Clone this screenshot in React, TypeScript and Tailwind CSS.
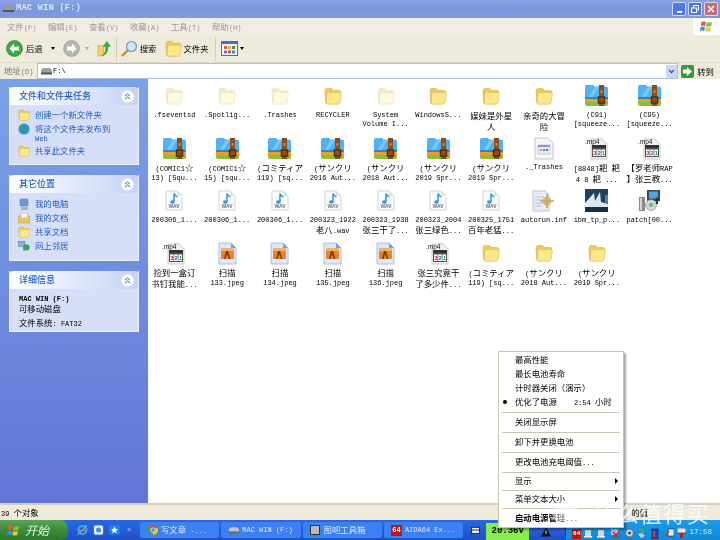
import { ReactNode } from "react";

// latin runs use a half-width mono, CJK runs sit a bit larger, like SimSun at small size
function T({ children }: { children: string }) {
  const parts = children.split(/([\u2e80-\u9fff\uff00-\uffef\u3000-\u30ff\u2606]+)/);
  return (
    <span>
      {parts.map((p, i) =>
        i % 2 === 1 ? (
          <span key={i} className="text-[8.4px] font-['Noto_Sans_CJK_SC']">
            {p}
          </span>
        ) : (
          <span key={i}>{p}</span>
        )
      )}
    </span>
  );
}

function Folder({ pale = false, size = 18 }: { pale?: boolean; size?: number }) {
  return (
    <svg width={size} height={size} viewBox="0 0 18 18">
      <path
        d="M1 4 Q1 1.5 3 1.5 H7.5 L9.5 3.5 H15 Q17 3.5 16.8 5.5 L15.8 15 Q15.6 17 13.5 17 H3.5 Q1.8 17 1.6 15 Z"
        fill={pale ? "#f4ebc6" : "#eccb5e"}
        stroke={pale ? "#e6dcb8" : "#c9a23e"}
        strokeWidth="0.5"
      />
      <path
        d="M2.8 7.2 Q3 5.6 4.6 5.6 H15.8 Q17.6 5.6 17.4 7.2 L15.9 15.4 Q15.6 17 14 17 H3.6 Q2.2 17 2.3 15.4 Z"
        fill={pale ? "#fff9de" : "#ffe888"}
        stroke={pale ? "#e9dfbc" : "#d9b54a"}
        strokeWidth="0.5"
      />
    </svg>
  );
}

function Zip() {
  return (
    <svg width="23" height="21" viewBox="0 0 23 21">
      <path d="M0 2 Q0 0 2 0 H8 L9.5 1.5 H21 Q23 1.5 23 3.5 V14 H0 Z" fill="#4fb2f2" />
      <path d="M3 13 L10 2 H14 L7 13 Z" fill="#7ac8f6" />
      <path d="M0 12 H23 V14 H0 Z" fill="#2e86d0" />
      <path d="M0 14 H23 V17 H0 Z" fill="#f39c1f" />
      <path d="M0 17 H23 V19 Q23 21 21 21 H2 Q0 21 0 19 Z" fill="#86bf3e" />
      <rect x="14" y="0" width="5" height="21" fill="#8a4e1f" />
      <rect x="13.4" y="12" width="6.2" height="6" fill="none" stroke="#4f2b0e" strokeWidth="1.3" />
      <rect x="15.5" y="5" width="2" height="3" fill="#c08a4a" />
    </svg>
  );
}

function Wav() {
  return (
    <svg width="18" height="21" viewBox="0 0 18 21">
      <path d="M1 1 H12 L17 6 V20 H1 Z" fill="#fbfcfe" stroke="#cfd3d9" />
      <path d="M12 1 V6 H17 Z" fill="#dfe3e8" />
      <path d="M9 3.5 V11.5 M9 3.5 Q10 6.5 12.5 7" stroke="#2a9be0" strokeWidth="1.5" fill="none" />
      <ellipse cx="7.4" cy="12" rx="2.4" ry="1.8" fill="#2a9be0" />
      <text x="9" y="18.2" textAnchor="middle" fontSize="5" fill="#6b7078" fontFamily="Liberation Sans" fontWeight="700">
        WAV
      </text>
    </svg>
  );
}

function Mp4() {
  return (
    <svg width="24" height="23" viewBox="0 0 24 23">
      <path d="M6 2 H17 L22 7 V22 H6 Z" fill="#f2f2f2" stroke="#c9c9c9" />
      <text x="0" y="6.5" fontSize="6.5" fill="#111" fontFamily="Liberation Sans">
        .mp4
      </text>
      <rect x="7" y="8" width="14" height="3" fill="#333" />
      <rect x="7" y="11" width="14" height="9" fill="#555" />
      <rect x="8" y="12.5" width="3.6" height="6.5" fill="#fff" />
      <rect x="12.2" y="12.5" width="3.6" height="6.5" fill="#fff" />
      <rect x="16.4" y="12.5" width="3.6" height="6.5" fill="#fff" />
      <text x="8.3" y="18.3" fontSize="6" fill="#d02020" fontFamily="Liberation Sans" fontWeight="700">3</text>
      <text x="12.6" y="18.3" fontSize="6" fill="#2060d0" fontFamily="Liberation Sans" fontWeight="700">2</text>
      <text x="16.8" y="18.3" fontSize="6" fill="#20a040" fontFamily="Liberation Sans" fontWeight="700">1</text>
    </svg>
  );
}

function Jpeg() {
  return (
    <svg width="19" height="23" viewBox="0 0 19 23">
      <path d="M1 1 H13 L18 6 V22 H1 Z" fill="#dbe7fb" stroke="#a9c0e8" />
      <path d="M13 1 V6 H18 Z" fill="#6fa2ea" />
      <rect x="3" y="6" width="13" height="11" fill="#e8862e" />
      <rect x="3" y="6" width="13" height="3" fill="#f3b264" />
      <path d="M8 9 L6 17 H7.5 L9 12 L11 17 H12.5 L10 9 Z" fill="#7a3a14" />
    </svg>
  );
}

function DocIcon() {
  return (
    <svg width="20" height="23" viewBox="0 0 20 23">
      <path d="M1 1 H14 L19 6 V22 H1 Z" fill="#f6f6f8" stroke="#c4c4cc" />
      <rect x="4" y="8" width="12" height="9" fill="#e9ecf6" stroke="#a8add0" strokeWidth="0.6" />
      <rect x="4" y="8" width="12" height="2" fill="#8d93c4" />
      <rect x="6" y="12" width="2" height="2" fill="#e8932a" />
      <rect x="9" y="12" width="2" height="2" fill="#3f9c4d" />
      <rect x="12" y="12" width="2" height="2" fill="#3f6fc4" />
    </svg>
  );
}

function InfIcon() {
  return (
    <svg width="23" height="22" viewBox="0 0 23 22">
      <path d="M1 1 H13 L17 5 V21 H1 Z" fill="#e6edf8" stroke="#b5c3da" />
      <path d="M3 7 H12 M3 10 H10 M3 13 H11 M3 16 H9" stroke="#a7b6cf" strokeWidth="0.8" />
      <circle cx="15" cy="11" r="4.5" fill="#d9b97a" />
      <circle cx="15" cy="11" r="1.6" fill="#f4ead2" />
      <path d="M15 4 V18 M8 11 H22" stroke="#c9a45e" strokeWidth="1.6" />
    </svg>
  );
}

function IbmIcon() {
  return (
    <svg width="23" height="23" viewBox="0 0 23 23">
      <rect width="23" height="23" fill="#23405e" />
      <path d="M0 14 L9 4 L10 12 L15 3 L16 13 L23 15 V23 H0 Z" fill="#dfe7ee" />
      <path d="M0 18 H23 V23 H0 Z" fill="#163049" />
      <rect x="20" y="6" width="3" height="8" fill="#5d7f9e" />
    </svg>
  );
}

function SetupIcon() {
  return (
    <svg width="23" height="23" viewBox="0 0 23 23">
      <rect x="9" y="1" width="13" height="11" fill="#3f4654" />
      <rect x="11" y="2.5" width="9" height="7" fill="#49a7e0" />
      <rect x="1" y="8" width="6" height="14" fill="#8a8a8a" />
      <rect x="2" y="9" width="2" height="12" fill="#d6d6d6" />
      <circle cx="13" cy="16" r="5.5" fill="#cfd6de" stroke="#666" strokeWidth="0.5" />
      <circle cx="13" cy="16" r="2" fill="#6cbb3c" />
      <path d="M19 8 L22 12 H20 V15 H18 V12 H16 Z" fill="#333" />
    </svg>
  );
}

const icons: Record<string, ReactNode> = {
  h: <Folder pale />,
  f: <Folder />,
  z: <Zip />,
  d: <DocIcon />,
  m: <Mp4 />,
  w: <Wav />,
  j: <Jpeg />,
  i: <InfIcon />,
  b: <IbmIcon />,
  s: <SetupIcon />,
};

const files: [string, string][] = [
  ["h", ".fseventsd"],
  ["h", ".Spotlig..."],
  ["h", ".Trashes"],
  ["f", "RECYCLER"],
  ["h", "System\nVolume I..."],
  ["f", "WindowsS..."],
  ["f", "媒妹是外星\n人"],
  ["f", "亲奇的大冒\n险"],
  ["z", "(C91)\n[squeeze..."],
  ["z", "(C95)\n[squeeze..."],
  ["z", "(COMIC1☆\n13) [Squ..."],
  ["z", "(COMIC1☆\n15) [squ..."],
  ["z", "(コミティア\n119) [sq..."],
  ["z", "(サンクリ\n2016 Aut..."],
  ["z", "(サンクリ\n2018 Aut..."],
  ["z", "(サンクリ\n2019 Spr..."],
  ["z", "(サンクリ\n2019 Spr..."],
  ["d", "._Trashes"],
  ["m", "[8848]耙 耙\n4 8 耙 ..."],
  ["m", "【罗老师RAP\n】张三教..."],
  ["w", "200306_1..."],
  ["w", "200306_1..."],
  ["w", "200306_1..."],
  ["w", "200323_1922\n老八.wav"],
  ["w", "200323_1938\n张三干了..."],
  ["w", "200323_2004\n张三绿色..."],
  ["w", "200325_1751\n百年老猛..."],
  ["i", "autorun.inf"],
  ["b", "ibm_tp_p..."],
  ["s", "patch[00..."],
  ["m", "捡到一盒订\n书钉我能..."],
  ["j", "扫描\n133.jpeg"],
  ["j", "扫描\n134.jpeg"],
  ["j", "扫描\n135.jpeg"],
  ["j", "扫描\n136.jpeg"],
  ["m", "张三究竟干\n了多少件..."],
  ["f", "(コミティア\n119) [sq..."],
  ["f", "(サンクリ\n2018 Aut..."],
  ["f", "(サンクリ\n2019 Spr..."],
];

function Chevron() {
  return (
    <span className="flex h-[13px] w-[13px] items-center justify-center rounded-full bg-white shadow-[0_0_1px_#8aa0dc]">
      <svg width="7" height="7" viewBox="0 0 7 7" fill="none" stroke="#215dc6" strokeWidth="1">
        <path d="M1 3.2 L3.5 1 L6 3.2 M1 6 L3.5 3.8 L6 6" />
      </svg>
    </span>
  );
}

function Panel({ title, children, bodyClass }: { title: string; children: ReactNode; bodyClass: string }) {
  return (
    <div className="border-x border-b border-[#eef2fd]">
      <div className="flex h-[18px] items-center justify-between rounded-t-[3px] bg-gradient-to-r from-white to-[#c6d3f7] pl-[9px] pr-[4px]">
        <span className="text-[9px] font-['Noto_Sans_CJK_SC'] font-medium text-[#215dc6]">{title}</span>
        <Chevron />
      </div>
      <div className={`bg-[#d6dff7] ${bodyClass}`}>{children}</div>
    </div>
  );
}

function LinkRow({ icon, children }: { icon: ReactNode; children: ReactNode }) {
  return (
    <div className="flex items-start gap-[5px] leading-[9px] text-[#215dc6]">
      <span className="flex h-[14px] w-[12px] items-center justify-center">{icon}</span>
      <span className="pt-[2px]">{children}</span>
    </div>
  );
}

const GlobeIcon = (
  <svg width="12" height="12" viewBox="0 0 12 12">
    <circle cx="6" cy="6" r="5.5" fill="#2e8fd6" />
    <path d="M2 3 Q5 2 6 4 Q5 7 3 6 Z M7 6 Q10 5 10 8 Q8 11 7 9 Z" fill="#3fa83f" />
  </svg>
);
const PcIcon = (
  <svg width="12" height="13" viewBox="0 0 12 13">
    <rect x="2" y="1" width="8" height="7" rx="1" fill="#6f96d8" stroke="#4a6ea8" strokeWidth="0.5" />
    <rect x="3" y="9" width="7" height="3" fill="#a7b4c8" />
  </svg>
);
const DocsIcon = (
  <svg width="12" height="12" viewBox="0 0 12 12">
    <path d="M0.5 4 H11.5 V11 H0.5 Z" fill="#eac56c" stroke="#b8953a" strokeWidth="0.5" />
    <rect x="3" y="1" width="6.5" height="5" fill="#f7f7f7" stroke="#9aa" strokeWidth="0.4" />
  </svg>
);
const NetIcon = (
  <svg width="13" height="12" viewBox="0 0 13 12">
    <rect x="0.5" y="1" width="7" height="5.5" fill="#7fb0e0" stroke="#4a6ea8" strokeWidth="0.5" />
    <circle cx="9" cy="7.5" r="3.5" fill="#3fa83f" />
    <path d="M6.5 6 L6.5 11" stroke="#2e8fd6" strokeWidth="1.5" />
  </svg>
);

function Sidebar() {
  return (
    <aside className="flex w-[148px] shrink-0 flex-col gap-[10px] bg-gradient-to-b from-[#7ba2e7] to-[#6375d6] pl-[9px] pr-[9px] pt-[8px]">
      <Panel title="文件和文件夹任务" bodyClass="h-[59px] pl-[8px] pt-[3px]">
        <LinkRow icon={<Folder size={12} />}><T>创建一个新文件夹</T></LinkRow>
        <LinkRow icon={GlobeIcon}>
          <T>将这个文件夹发布到</T>
          <br />
          <T>Web</T>
        </LinkRow>
        <LinkRow icon={<Folder size={12} />}><T>共享此文件夹</T></LinkRow>
      </Panel>
      <Panel title="其它位置" bodyClass="h-[67px] pl-[8px] pt-[4px]">
        <LinkRow icon={PcIcon}><T>我的电脑</T></LinkRow>
        <LinkRow icon={DocsIcon}><T>我的文档</T></LinkRow>
        <LinkRow icon={<Folder size={12} />}><T>共享文档</T></LinkRow>
        <LinkRow icon={NetIcon}><T>网上邻居</T></LinkRow>
      </Panel>
      <Panel title="详细信息" bodyClass="h-[42px] pl-[9px] pt-[6px] text-black leading-[9px]">
        <div className="font-bold"><T>MAC WIN (F:)</T></div>
        <div><T>可移动磁盘</T></div>
        <div className="mt-[3px]"><T>文件系统: FAT32</T></div>
      </Panel>
    </aside>
  );
}

function FileGrid() {
  return (
    <main className="flex-1 bg-white pt-[4.5px]">
      <div className="grid grid-cols-[repeat(10,52.8px)] auto-rows-[52.6px]">
        {files.map(([k, label], i) => (
          <div key={i} className="flex flex-col items-center">
            <div className="flex h-[24px] items-center justify-center">{icons[k]}</div>
            <div className="mt-[3px] whitespace-pre-line text-center leading-[9px] text-black">
              <T>{label}</T>
            </div>
          </div>
        ))}
      </div>
    </main>
  );
}

function ArrowCircle({ gray = false, dir = "l" }: { gray?: boolean; dir?: string }) {
  return (
    <svg width="17" height="17" viewBox="0 0 17 17">
      <circle cx="8.5" cy="8.5" r="8" fill={gray ? "#b6b6b0" : "#3fa83f"} stroke={gray ? "#9a9a94" : "#2c7c2c"} strokeWidth="0.6" />
      <path
        d={dir === "l" ? "M8 3.5 L3.5 8.5 L8 13.5 V10.5 H13 V6.5 H8 Z" : "M9 3.5 L13.5 8.5 L9 13.5 V10.5 H4 V6.5 H9 Z"}
        fill="#fff"
      />
    </svg>
  );
}

function Toolbar() {
  return (
    <div className="flex h-[28px] items-center bg-[#eeebdc] pl-[6px] border-b border-[#dedbc9]">
      <ArrowCircle />
      <span className="ml-[3px] text-[8.4px] font-['Noto_Sans_CJK_SC']">后退</span>
      <span className="ml-[8px] h-0 w-0 border-x-[2px] border-t-[3px] border-x-transparent border-t-black" />
      <span className="ml-[8px]"><ArrowCircle gray dir="r" /></span>
      <span className="ml-[5px] h-0 w-0 border-x-[2px] border-t-[3px] border-x-transparent border-t-[#aaa]" />
      <span className="ml-[8px] flex">
        <svg width="15" height="17" viewBox="0 0 16 18">
          <path d="M1 6 H7 V17 H1 Z" fill="#f3d26b" stroke="#b8953a" strokeWidth="0.5" />
          <path d="M4 17 C9 14 9 11 9 7 H6 L10.5 1 L15 7 H12 C12 12 11 16 4 17 Z" fill="#3fa83f" />
        </svg>
      </span>
      <span className="ml-[4px] h-[24px] w-px bg-[#cfcdb9]" />
      <span className="ml-[3px] flex">
        <svg width="18" height="18" viewBox="0 0 18 18">
          <circle cx="11.5" cy="6.5" r="5" fill="#cfe6f8" stroke="#6f96c4" strokeWidth="1.2" />
          <path d="M8 10 L2 16" stroke="#c98a3a" strokeWidth="2.4" />
        </svg>
      </span>
      <span className="ml-[2px] text-[8.4px] font-['Noto_Sans_CJK_SC']">搜索</span>
      <span className="ml-[8px] flex"><Folder size={17} /></span>
      <span className="ml-[2px] text-[8.4px] font-['Noto_Sans_CJK_SC']">文件夹</span>
      <span className="ml-[6px] h-[24px] w-px bg-[#cfcdb9]" />
      <span className="ml-[5px] flex">
        <svg width="17" height="15" viewBox="0 0 17 15">
          <rect x="0.5" y="0.5" width="16" height="14" fill="#f4f7fd" stroke="#3d72c6" />
          <rect x="0.5" y="0.5" width="16" height="2.5" fill="#3d72c6" />
          <rect x="3" y="5" width="3" height="3" fill="#d9534f" />
          <rect x="7" y="5" width="3" height="3" fill="#e8b32c" />
          <rect x="11" y="5" width="3" height="3" fill="#3f9c4d" />
          <rect x="3" y="9.5" width="3" height="3" fill="#4a7fd0" />
          <rect x="7" y="9.5" width="3" height="3" fill="#d9534f" />
          <rect x="11" y="9.5" width="3" height="3" fill="#4a7fd0" />
        </svg>
      </span>
      <span className="ml-[2px] h-0 w-0 border-x-[2px] border-t-[3px] border-x-transparent border-t-black" />
    </div>
  );
}

function TitleBar() {
  const btn = "flex h-[14px] w-[14px] items-center justify-center rounded-[2px] border border-white/70";
  return (
    <div className="flex h-[18px] items-center bg-gradient-to-b from-[#8aa5e4] via-[#7a97df] to-[#7f9be0] pl-[2px] pr-[2px]">
      <svg width="12" height="8" viewBox="0 0 12 8">
        <path d="M1 3 L3 1 H10 L12 3 V6 H1 Z" fill="#9a9a9a" />
        <rect x="1" y="5" width="11" height="2" fill="#555" />
      </svg>
      <span className="ml-[2px] font-bold text-[9px] text-[#d8e2f8]">MAC WIN (F:)</span>
      <div className="ml-auto flex gap-[2px]">
        <span className={`${btn} bg-[#4f79e0]`}>
          <span className="mt-[6px] h-[2px] w-[5px] bg-white" />
        </span>
        <span className={`${btn} bg-[#4f79e0]`}>
          <svg width="8" height="8" viewBox="0 0 8 8" fill="none" stroke="#fff">
            <rect x="2.5" y="0.5" width="5" height="4.5" />
            <rect x="0.5" y="3" width="5" height="4.5" fill="#4f79e0" />
          </svg>
        </span>
        <span className={`${btn} bg-[#b9737c]`}>
          <svg width="8" height="8" viewBox="0 0 8 8" stroke="#fff" strokeWidth="1.3">
            <path d="M1 1 L7 7 M7 1 L1 7" />
          </svg>
        </span>
      </div>
    </div>
  );
}

function WinFlag({ size = 13 }: { size?: number }) {
  return (
    <svg width={size} height={size} viewBox="0 0 13 13">
      <path d="M1.5 2 Q3.5 1 6 2 L5.2 6 Q3 5 0.8 6 Z" fill="#e8562a" />
      <path d="M7 2.2 Q9.5 3 12 2 L11.2 6 Q9 7 6.2 6.2 Z" fill="#7cc242" />
      <path d="M0.6 7 Q3 6 5 7 L4.3 11 Q2.2 10 0 11 Z" fill="#3f8fe0" />
      <path d="M6 7.2 Q8.5 8 11 7 L10.2 11 Q7.8 12 5.3 11 Z" fill="#f7c52b" />
    </svg>
  );
}

function MenuBar() {
  const items = ["文件(F)", "编辑(E)", "查看(V)", "收藏(A)", "工具(T)", "帮助(H)"];
  return (
    <div className="flex h-[17px] items-center bg-[#f0eee1] pl-[7px]">
      <div className="flex gap-[12px] text-[#9a988c]">
        {items.map((m) => (
          <span key={m} className="w-[29px] whitespace-nowrap"><T>{m}</T></span>
        ))}
      </div>
      <div className="ml-auto flex h-full w-[27px] items-center justify-center bg-white">
        <WinFlag />
      </div>
    </div>
  );
}

function AddressBar() {
  return (
    <div className="flex h-[16px] items-center bg-[#eeebdc] pl-[4px] pr-[6px]">
      <span className="w-[33px] whitespace-nowrap text-[#77756a]"><T>地址(D)</T></span>
      <div className="flex h-full flex-1 items-center border border-[#aebfd6] bg-white pl-[2px]">
        <svg width="12" height="7" viewBox="0 0 12 7">
          <path d="M1 2 L3 0 H10 L12 2 V5 H1 Z" fill="#a0a0a0" />
          <rect x="1" y="4.5" width="11" height="2" fill="#555" />
        </svg>
        <span className="ml-[1px]">F:\</span>
        <span className="ml-auto flex h-[13px] w-[11px] items-center justify-center rounded-[1px] bg-[#c9d8f6]">
          <svg width="7" height="5" viewBox="0 0 7 5" fill="none" stroke="#3b5a9b" strokeWidth="1.3">
            <path d="M1 1 L3.5 3.5 L6 1" />
          </svg>
        </span>
      </div>
      <span className="ml-[3px] flex items-center gap-[3px] text-[8.4px] font-['Noto_Sans_CJK_SC']">
        <svg width="13" height="13" viewBox="0 0 13 13">
          <rect width="13" height="13" rx="2" fill="#2f9a3e" />
          <path d="M6 2 L11 6.5 L6 11 V8.5 H2 V4.5 H6 Z" fill="#fff" />
        </svg>
        转到
      </span>
    </div>
  );
}

function TaskButton({ icon, label }: { icon: ReactNode; label: string }) {
  return (
    <div className="flex h-[16px] w-[79.3px] shrink-0 items-center gap-[3px] rounded-[2px] bg-[#3c81f3] pl-[7px] text-[#dfe9fb]">
      <span className="flex w-[11px] justify-center">{icon}</span>
      <span className="whitespace-nowrap"><T>{label}</T></span>
    </div>
  );
}

function Tray() {
  return (
    <div className="ml-[14px] flex h-full flex-1 items-center border-l border-[#10388f] bg-gradient-to-b from-[#1b9be8] to-[#0f8ad8] pl-[6px]">
      <span className="mt-[7px] flex h-[10px] w-[9px] items-center justify-center bg-[#b51a1a] text-[6px] font-bold text-white">64</span>
      <svg className="ml-[3px] mt-[7px]" width="8" height="9" viewBox="0 0 8 9">
        <rect x="1" y="1" width="6" height="6" fill="#cfd8e8" />
        <rect x="0" y="7" width="8" height="1.5" fill="#fff" />
      </svg>
      <svg className="ml-[5px] mt-[7px]" width="8" height="9" viewBox="0 0 8 9">
        <rect x="1" y="1" width="6" height="6" fill="#cfd8e8" />
        <rect x="0" y="7" width="8" height="1.5" fill="#fff" />
      </svg>
      <svg className="ml-[6px] mt-[6px]" width="9" height="10" viewBox="0 0 9 10">
        <rect x="0" y="1" width="7" height="6" fill="#9fc0e8" />
        <path d="M2 4 L8 10 M8 4 L2 10" stroke="#d8201c" strokeWidth="1.6" />
      </svg>
      <svg className="ml-[5px] mt-[6px]" width="9" height="10" viewBox="0 0 9 10">
        <circle cx="4.5" cy="5" r="4" fill="#c4ccd6" stroke="#445" strokeWidth="0.6" />
        <circle cx="4.5" cy="5" r="1.3" fill="#334" />
      </svg>
      <svg className="ml-[3px] mt-[6px]" width="9" height="10" viewBox="0 0 9 10">
        <path d="M1 1 L5 0 L8 4 L4 5 Z" fill="#4fa84f" />
        <path d="M1 6 L5 5 L8 8 L4 10 Z" fill="#bcd" />
      </svg>
      <svg className="ml-[5px] mt-[6px]" width="8" height="11" viewBox="0 0 8 11">
        <rect x="1" y="1" width="6" height="10" fill="#2a3fb8" stroke="#111" strokeWidth="0.5" />
        <rect x="2" y="3" width="2" height="6" fill="#e33" />
      </svg>
      <svg className="ml-[6px] mt-[6px]" width="9" height="10" viewBox="0 0 9 10">
        <rect x="3" y="1" width="6" height="7" fill="#e8e8e8" stroke="#222" strokeWidth="0.6" />
        <path d="M0 9 L4 3" stroke="#d33" strokeWidth="1.4" />
      </svg>
      <svg className="ml-[3px] mt-[6px]" width="9" height="11" viewBox="0 0 9 11">
        <rect x="0" y="0" width="9" height="5" fill="#e6e6e6" stroke="#222" strokeWidth="0.6" />
        <rect x="3" y="5" width="3" height="5" fill="#d01818" />
      </svg>
      <span className="ml-auto mt-[5px] pr-[8px] text-[7.5px] leading-[9px] text-[#dcecff]">17:58</span>
    </div>
  );
}

function Taskbar() {
  return (
    <div className="flex h-[20px] items-center bg-gradient-to-b from-[#2a66e0] via-[#245edb] to-[#1f4fc0]">
      <div className="flex h-full w-[68px] shrink-0 items-center gap-[5px] rounded-r-[8px] bg-gradient-to-b from-[#5aa457] via-[#3c8a3c] to-[#2d7a2d] pl-[7px]">
        <WinFlag />
        <span className="font-['Noto_Sans_CJK_SC'] text-[12px] italic text-[#eaf5ea]">开始</span>
      </div>
      <div className="ml-[9px] flex w-[63px] shrink-0 items-center gap-[5px]">
        <svg width="11" height="12" viewBox="0 0 11 12">
          <circle cx="5.5" cy="6" r="4" fill="none" stroke="#3fa7ee" strokeWidth="2" />
          <path d="M1 6.5 H10" stroke="#3fa7ee" />
          <path d="M0 11 Q5 8 10 1" stroke="#f0b429" fill="none" />
        </svg>
        <svg width="11" height="12" viewBox="0 0 11 12">
          <rect x="0.5" y="1" width="10" height="10" rx="2" fill="#e7f0fb" stroke="#2d6fd0" />
          <circle cx="5.5" cy="6" r="2.5" fill="#3d8ae0" />
        </svg>
        <svg width="11" height="12" viewBox="0 0 11 12">
          <rect x="0" y="1" width="11" height="10" rx="2" fill="#1c7fe8" />
          <path d="M5.5 2.5 L6.6 5 L9 5.2 L7.2 6.8 L7.8 9.3 L5.5 8 L3.2 9.3 L3.8 6.8 L2 5.2 L4.4 5 Z" fill="#fff" />
        </svg>
        <span className="ml-[2px] text-[#bcd0f5]">»</span>
      </div>
      <div className="flex items-center gap-[2px]">
        <TaskButton
          icon={
            <svg width="10" height="10" viewBox="0 0 10 10">
              <circle cx="5" cy="5" r="5" fill="#e8453c" />
              <path d="M5 5 L9.5 2.5 A5 5 0 0 1 5 10 Z" fill="#f4c20d" />
              <path d="M5 5 L5 10 A5 5 0 0 1 0.6 2.5 Z" fill="#34a853" />
              <circle cx="5" cy="5" r="2.2" fill="#4285f4" stroke="#fff" strokeWidth="0.7" />
            </svg>
          }
          label="写文章 -..."
        />
        <TaskButton
          icon={
            <svg width="12" height="7" viewBox="0 0 12 7">
              <path d="M1 2 L3 0 H10 L12 2 V5 H1 Z" fill="#c4c4c4" />
              <rect x="1" y="4.5" width="11" height="2" fill="#666" />
            </svg>
          }
          label="MAC WIN (F:)"
        />
        <TaskButton icon={<span className="block h-[10px] w-[10px] border border-[#333] bg-[#bbb]" />} label="图吧工具箱" />
        <TaskButton
          icon={<span className="block h-[11px] w-[11px] bg-[#b51a1a] text-center text-[7px] font-bold leading-[11px] text-white">64</span>}
          label="AIDA64 Ex..."
        />
      </div>
      <svg className="ml-[8px] shrink-0" width="9" height="10" viewBox="0 0 10 10">
        <rect x="0.5" y="2" width="9" height="7" fill="#e9e9e9" stroke="#222" />
        <path d="M0 5 H10" stroke="#222" />
      </svg>
      <span className="ml-[6px] mt-[3px] flex h-[17px] w-[43px] shrink-0 items-center justify-center bg-[#86f04a] text-[9px] font-bold text-black">
        20.36V
      </span>
      <svg className="ml-[12px] mt-[3px] shrink-0" width="10" height="10" viewBox="0 0 11 10">
        <path d="M5.5 0 L11 10 H0 Z" fill="#111" />
        <rect x="5" y="3.5" width="1" height="3.5" fill="#fff" />
      </svg>
      <Tray />
    </div>
  );
}

function PopupRow({ children, h = "h-[14px]", bold = false }: { children: ReactNode; h?: string; bold?: boolean }) {
  return <div className={`relative flex items-center pl-[16px] ${h} ${bold ? "font-bold" : ""}`}>{children}</div>;
}

function PowerMenu() {
  const sep = <div className="mx-[3px] my-[2.5px] h-px bg-[#c9c5b2]" />;
  const arrow = <span className="absolute right-[5px] h-0 w-0 border-y-[3px] border-l-[3px] border-y-transparent border-l-black" />;
  return (
    <div className="absolute left-[498px] top-[351px] h-[177px] w-[126px] border border-[#c9c5b2] bg-white pt-[1px] shadow-[2px_2px_2px_rgba(0,0,0,0.35)]">
      <PopupRow><T>最高性能</T></PopupRow>
      <PopupRow><T>最长电池寿命</T></PopupRow>
      <PopupRow><T>计时器关闭（演示）</T></PopupRow>
      <PopupRow>
        <span className="absolute left-[4px] h-[4px] w-[4px] rounded-full bg-black" />
        <T>优化了电源</T>
        <span className="ml-[17px] whitespace-nowrap"><T>2:54 小时</T></span>
      </PopupRow>
      {sep}
      <PopupRow><T>关闭显示屏</T></PopupRow>
      {sep}
      <PopupRow><T>卸下并更换电池</T></PopupRow>
      {sep}
      <PopupRow><T>更改电池充电阈值...</T></PopupRow>
      {sep}
      <PopupRow h="h-[12px]"><T>显示</T>{arrow}</PopupRow>
      {sep}
      <PopupRow h="h-[12px]"><T>菜单文本大小</T>{arrow}</PopupRow>
      {sep}
      <PopupRow bold><T>启动电源管理...</T></PopupRow>
    </div>
  );
}

function Watermark() {
  return (
    <div className="absolute left-[553px] top-[499px] flex items-center gap-[14px] font-['Noto_Sans_CJK_SC'] text-white/80">
      <span className="flex h-[26px] w-[26px] items-center justify-center rounded-full bg-white/50 text-[15px]">值</span>
      <span className="text-[22px] leading-[27px] tracking-[1.5px]">什么值得买</span>
    </div>
  );
}

export default function App() {
  return (
    <div className="relative flex h-[540px] w-[720px] flex-col overflow-hidden bg-white text-[7px] text-black font-['Liberation_Mono','Noto_Sans_CJK_SC',monospace] blur-[0.35px]">
      <TitleBar />
      <MenuBar />
      <Toolbar />
      <AddressBar />
      <div className="flex min-h-0 flex-1">
        <Sidebar />
        <FileGrid />
      </div>
      <div className="flex h-[17px] items-center border-t-2 border-[#d2cfbe] bg-[#eeebdc] pl-[1px]">
        <T>39 个对象</T>
        <span className="ml-auto pr-[72px]"><T>的值</T></span>
      </div>
      <Taskbar />
      <PowerMenu />
      <Watermark />
    </div>
  );
}
